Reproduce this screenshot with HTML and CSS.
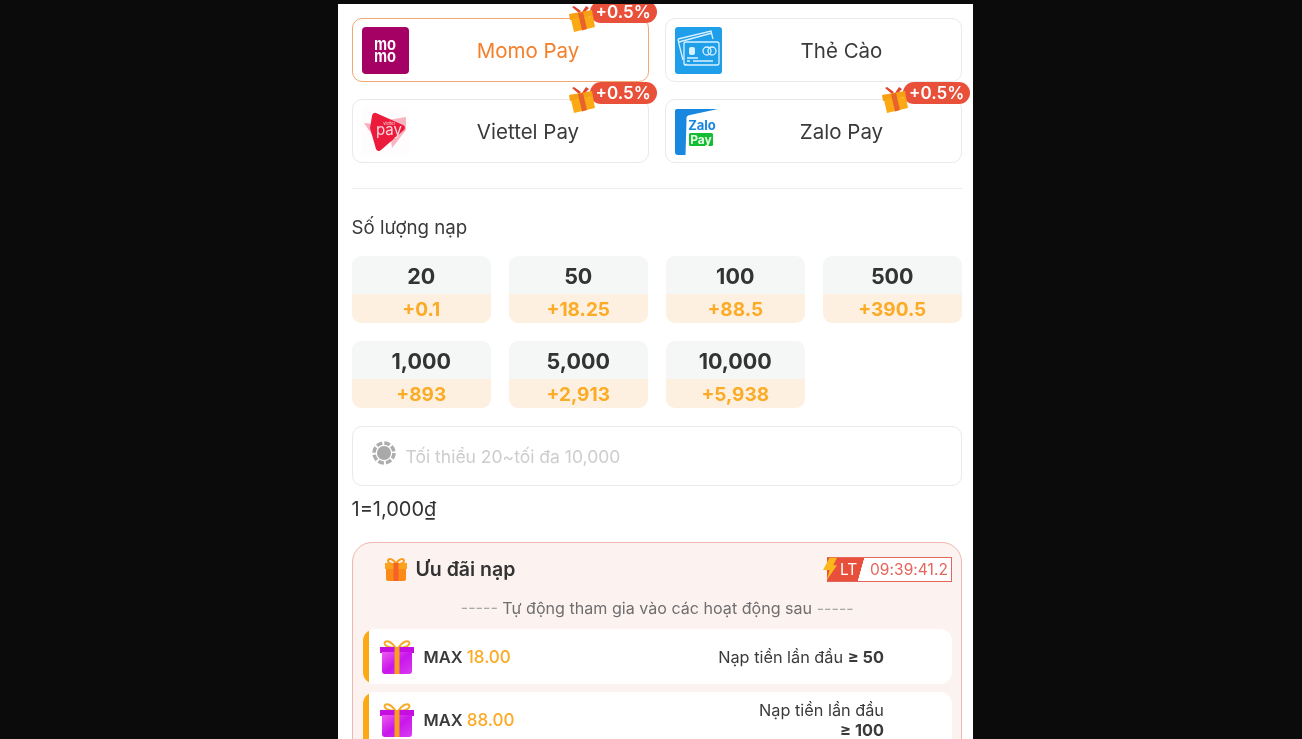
FILE: index.html
```html
<!DOCTYPE html>
<html lang="vi">
<head>
<meta charset="utf-8">
<title>Nạp tiền</title>
<link rel="stylesheet" href="styles.css">
</head>
<body>
<svg class="defs" width="0" height="0" aria-hidden="true">
  <defs>
    <linearGradient id="purple" x1="0" y1="0" x2="1" y2="1">
      <stop offset="0" stop-color="#ee5cf0"/><stop offset=".5" stop-color="#c916ec"/><stop offset="1" stop-color="#d93cf2"/>
    </linearGradient>
    <symbol id="gift-tilt" viewBox="0 0 26 26">
      <path d="M10 7 3 1l2-1 7 5zM13 6l4-6 3 2-4 4z" fill="#e2452f"/>
      <path d="M0 8 23 4l1 6L1 14z" fill="#f7a014"/>
      <path d="M2 13 24 10l2 11-21 5z" fill="#fbaa16"/>
      <path d="M9 7l5-1 4 17-5 1.500z" fill="#e8622c"/>
    </symbol>
    <symbol id="gift-purple" viewBox="0 0 36 36">
      <path d="M17 9C13 3 8 1 6 3c-2 3 3 6 11 6zM19 9c4-6 9-8 11-6 2 3-3 6-11 6z" fill="none" stroke="#f5ac2a" stroke-width="2"/>
      <path d="M1 8h34v6H1z" fill="#c40fe0"/>
      <path d="M3 13h30v19a3 3 0 0 1-3 3H6a3 3 0 0 1-3-3z" fill="url(#purple)"/>
      <path d="M15.500 8h5v27h-5z" fill="#f7a01f"/>
    </symbol>
  </defs>
</svg>
<main class="panel">
  <section class="channels">
    <div class="channel is-active">
      <svg class="logo" viewBox="0 0 47 47"><rect width="47" height="47" rx="4" fill="#a50064"/><text class="momo-text" x="12" y="23" textLength="22" lengthAdjust="spacingAndGlyphs">mo</text><text class="momo-text" x="12" y="35" textLength="22" lengthAdjust="spacingAndGlyphs">mo</text></svg>
      <span class="channel-name">Momo Pay</span>
      <span class="bonus"><svg class="bonus-gift"><use href="#gift-tilt"/></svg><span class="bonus-pill">+0.5%</span></span>
    </div>
    <div class="channel">
      <svg class="logo" viewBox="0 0 47 47"><rect width="47" height="47" rx="3" fill="#1f9eea"/>
        <g fill="none" stroke="#d8f1ff" stroke-width="1.300"><path d="M3 12 36 4l2 8M3 12l1 5M4 15l33-9M8 33l-4-16M12 37l-3 1"/><rect x="9" y="15" width="35" height="23" rx="2"/></g>
        <rect x="14" y="20" width="6" height="8" rx="2" fill="#d8f1ff"/><circle cx="32" cy="24" r="4" fill="none" stroke="#d8f1ff" stroke-width="1.300"/><circle cx="37" cy="24" r="4" fill="none" stroke="#d8f1ff" stroke-width="1.300"/>
        <path d="M12 31h11M12 34h3M18 34h20" stroke="#d8f1ff" stroke-width="1.300"/></svg>
      <span class="channel-name">Thẻ Cào</span>
    </div>
    <div class="channel">
      <svg class="logo" viewBox="0 0 47 47"><rect width="47" height="47" fill="#fefcfc"/>
        <path d="M2 15 20 17v24z" fill="#f8b0bc"/><path d="M44 9 26 12l4 28 14-18z" fill="#f8b4c0"/>
        <path d="M10 8a3 3 0 0 1 4-3l27 12a3 3 0 0 1 1 5L19 42a3 3 0 0 1-5-1L8 20z" fill="#ec1b3c"/>
        <text class="vpay-small" x="27" y="17">viettel</text><text class="vpay" x="27" y="27">pay</text></svg>
      <span class="channel-name">Viettel Pay</span>
      <span class="bonus"><svg class="bonus-gift"><use href="#gift-tilt"/></svg><span class="bonus-pill">+0.5%</span></span>
    </div>
    <div class="channel">
      <svg class="logo" viewBox="0 0 47 47"><rect width="47" height="47" fill="#fff"/>
        <path d="M0 3a2 2 0 0 1 2-2h41L15 7c-3 .5-4 2-3.500 5l-1 35H3a3 3 0 0 1-3-3z" fill="#1787e0"/>
        <text class="zalo-text" x="27" y="22">Zalo</text><rect x="14" y="25" width="24" height="13" rx="1.500" fill="#12bd33"/><text class="zalo-pay" x="26" y="35.500">Pay</text></svg>
      <span class="channel-name">Zalo Pay</span>
      <span class="bonus"><svg class="bonus-gift"><use href="#gift-tilt"/></svg><span class="bonus-pill">+0.5%</span></span>
    </div>
  </section>

  <hr class="divider">

  <h2 class="section-label">Số lượng nạp</h2>
  <section class="amounts">
    <div class="amount"><span class="amount-value">20</span><span class="amount-bonus">+0.1</span></div>
    <div class="amount"><span class="amount-value">50</span><span class="amount-bonus">+18.25</span></div>
    <div class="amount"><span class="amount-value">100</span><span class="amount-bonus">+88.5</span></div>
    <div class="amount"><span class="amount-value">500</span><span class="amount-bonus">+390.5</span></div>
    <div class="amount"><span class="amount-value">1,000</span><span class="amount-bonus">+893</span></div>
    <div class="amount"><span class="amount-value">5,000</span><span class="amount-bonus">+2,913</span></div>
    <div class="amount"><span class="amount-value">10,000</span><span class="amount-bonus">+5,938</span></div>
  </section>

  <div class="field">
    <svg class="chip" viewBox="0 0 24 24"><circle cx="12" cy="12" r="10" fill="none" stroke="#adadad" stroke-width="3.500" stroke-dasharray="5.800 2.054"/><circle cx="12" cy="12" r="7" fill="#a9a9a9"/></svg>
    <span class="placeholder">Tối thiểu 20~tối đa 10,000</span>
  </div>
  <p class="rate">1=1,000₫</p>

  <section class="promo">
    <header class="promo-head">
      <svg class="promo-gift" viewBox="0 0 24 24"><path d="M12 7C9 1 4 1 4 4c0 2 3 3 8 3zM12 7c3-6 8-6 8-3 0 2-3 3-8 3z" fill="none" stroke="#fb9a1c" stroke-width="2"/><path d="M1 6h22v6H1z" fill="#fba21f"/><path d="M2 12h20v10a2 2 0 0 1-2 2H4a2 2 0 0 1-2-2z" fill="#fb8a16"/><path d="M9.500 6h5v18h-5z" fill="#f8602a"/></svg>
      <h3 class="promo-title">Ưu đãi nạp</h3>
      <div class="timer">
        <svg class="bolt" viewBox="0 0 15 24"><path d="M7 0h8l-4 8h4L4 24l3-11H0z" fill="#fbb81c"/></svg>
        <span class="timer-tag">LT</span>
        <span class="timer-time">09:39:41.2</span>
      </div>
    </header>
    <p class="promo-sub"><span class="dash">-----</span> Tự động tham gia vào các hoạt động sau <span class="dash">-----</span></p>
    <div class="offer">
      <svg class="offer-gift"><use href="#gift-purple"/></svg>
      <span class="offer-max">MAX <em>18.00</em></span>
      <span class="offer-cond">Nạp tiền lần đầu <b>≥&nbsp;50</b></span>
    </div>
    <div class="offer">
      <svg class="offer-gift"><use href="#gift-purple"/></svg>
      <span class="offer-max">MAX <em>88.00</em></span>
      <span class="offer-cond">Nạp tiền lần đầu <b>≥&nbsp;100</b></span>
    </div>
  </section>
</main>
</body>
</html>
```
FILE: styles.css
```css
* { box-sizing: border-box; }
html, body { height: 100%; }
body {
  margin: 0;
  height: 739px;
  overflow: hidden;
  background: #0b0b0b;
  padding: 4px 0 0 338px;
  font-family: Inter, "Noto Sans", "Liberation Sans", sans-serif;
  color: #333;
}
.defs { display: block; position: absolute; }
.panel {
  width: 635px;
  height: 760px;
  background: #fff;
  overflow: hidden;
  padding: 14px 11px 0 13.500px;
  filter: blur(.35px);
}

/* payment channels */
.channels {
  display: grid;
  grid-template-columns: 297px 297px;
  column-gap: 16.500px;
  row-gap: 17px;
}
.channel {
  position: relative;
  display: flex;
  align-items: center;
  height: 64px;
  padding-left: 9px;
  border: 1px solid #e9e9e9;
  border-radius: 10px;
}
.channel.is-active { border-color: #f0a877; }
.channel.is-active .channel-name { color: #f47f2b; }
.logo { width: 47px; height: 47px; flex: none; }
.channel-name {
  flex: 1;
  text-align: center;
  font-size: 20.500px;
  color: #3a3a3a;
}
.bonus {
  position: absolute;
  right: -9px;
  top: -18px;
  display: flex;
}
.bonus-gift {
  position: absolute;
  left: -21px;
  top: 5px;
  width: 26px;
  height: 26px;
}
.bonus-pill {
  width: 67px;
  height: 22px;
  padding-left: 6px;
  border-radius: 11px;
  background: #e9503a;
  color: #fff;
  font-size: 17px;
  font-weight: 600;
  line-height: 22px;
  white-space: nowrap;
}
.momo-text { font: 700 18px "Liberation Sans", sans-serif; fill: #fff; }
.vpay { font: 400 15px Inter, sans-serif; fill: #fbd6dc; text-anchor: middle; }
.vpay-small { font: 400 4px Inter, sans-serif; fill: #fbd6dc; text-anchor: middle; }
.zalo-text { font: 700 13px Inter, sans-serif; fill: #1787e0; text-anchor: middle; }
.zalo-pay { font: 700 12px Inter, sans-serif; fill: #e8ffe8; text-anchor: middle; }

.divider {
  height: 1px;
  margin: 25px 0 0;
  border: 0;
  background: #ececec;
}
.section-label {
  margin: 25px 0 0;
  font-size: 18.700px;
  font-weight: 400;
  line-height: 27px;
  color: #3a3a3a;
}

/* amounts */
.amounts {
  display: grid;
  grid-template-columns: repeat(4, 139.500px);
  column-gap: 17.500px;
  row-gap: 18px;
  margin-top: 15px;
}
.amount {
  display: flex;
  flex-direction: column;
  height: 67px;
  border-radius: 9px;
  overflow: hidden;
  text-align: center;
}
.amount-value {
  height: 38px;
  background: #f5f7f7;
  font-size: 21.500px;
  font-weight: 700;
  line-height: 41px;
  color: #333;
}
.amount-bonus {
  flex: 1;
  background: #fdf0e0;
  font-size: 19px;
  font-weight: 700;
  line-height: 31px;
  color: #fbab25;
}

/* input */
.field {
  display: flex;
  align-items: center;
  gap: 10px;
  height: 60px;
  margin-top: 18px;
  padding-left: 19px;
  border: 1px solid #e9e9e9;
  border-radius: 10px;
}
.chip { width: 24px; height: 24px; margin-top: -6px; flex: none; }
.placeholder { font-size: 17.500px; color: #cdcdcd; }
.rate {
  margin: 9px 0 0;
  font-size: 20px;
  line-height: 28px;
  color: #333;
}

/* promo */
.promo {
  height: 260px;
  margin-top: 19px;
  padding: 0 9px 0 10px;
  border: 1px solid #efb7b0;
  border-radius: 20px;
  background: #fcf2f0;
}
.promo-head {
  display: flex;
  align-items: center;
  height: 52px;
  padding-left: 21px;
}
.promo-gift { width: 24px; height: 24px; flex: none; }
.promo-title {
  margin: 0 0 0 8px;
  flex: 1;
  font-size: 19.500px;
  font-weight: 600;
  color: #333;
}
.timer {
  position: relative;
  display: flex;
  align-items: center;
  width: 125px;
  height: 25px;
  border: 1px solid #e4655c;
  border-left: 0;
  background: linear-gradient(105.600deg, #e8503c 0 35.600px, #fff 36px);
}
.bolt { position: absolute; left: -4px; top: -1px; width: 14px; height: 24px; }
.timer-tag {
  width: 43px;
  padding-left: 13px;
  font-size: 15.500px;
  color: #fff;
}
.timer-time {
  font-size: 15.500px;
  letter-spacing: .05px;
  color: #e4655c;
  white-space: nowrap;
}
.promo-sub {
  margin: 0;
  height: 34px;
  font-size: 16.100px;
  line-height: 26px;
  text-align: center;
  color: #6f6f6f;
}
.dash { color: #a8a8a8; }
.offer {
  display: flex;
  align-items: center;
  height: 55px;
  margin-bottom: 8px;
  padding-left: 16px;
  border-radius: 12px;
  background: linear-gradient(90deg, #fbaa15 0 6px, #fff 6px);
}
.offer + .offer { height: 64px; padding-bottom: 8px; }
.offer-gift { width: 36px; height: 36px; flex: none; }
.offer-max {
  margin-left: 9px;
  font-size: 16.500px;
  font-weight: 600;
  color: #3a3a3a;
}
.offer-max em {
  font-size: 17px;
  font-style: normal;
  font-weight: 500;
  color: #fbab25;
}
.offer-cond {
  width: 172px;
  margin-left: auto;
  margin-right: 68px;
  font-size: 16.300px;
  line-height: 20px;
  text-align: right;
  color: #3a3a3a;
}
.offer-cond b { font-weight: 700; }
```
